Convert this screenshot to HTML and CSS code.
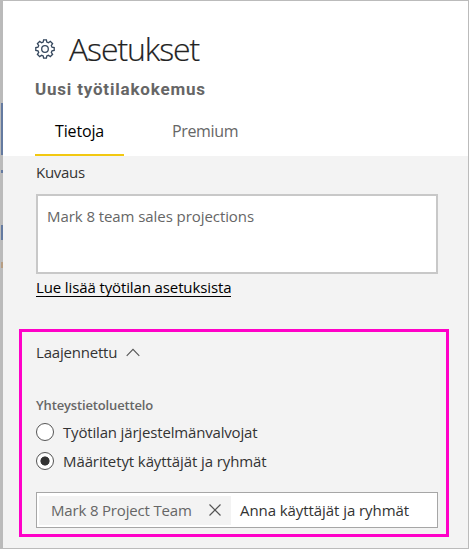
FILE: index.html
```html
<!DOCTYPE html>
<html lang="fi">
<head>
<meta charset="utf-8">
<title>Asetukset</title>
<link rel="stylesheet" href="styles.css">
</head>
<body>
<div class="window">
  <div class="backdrop"><i class="bar"></i><i class="dot"></i><i class="block"></i><i class="spark"></i></div>
  <main class="panel">
    <header class="head">
      <div class="title-row">
        <svg class="gear" viewBox="0 0 20 20" width="20" height="20"><path d="M8.200 3 8.600.8h2.800l.4 2.200 1.600.7 1.900-1.300 2.300 2.300-1.300 1.900.7 1.600 2.200.4v2.800l-2.200.4-.7 1.600 1.300 1.900-2.300 2.300-1.900-1.300-1.600.7-.4 2.200H8.600L8.200 17l-1.600-.7-1.900 1.300-2.300-2.300 1.300-1.900-.7-1.600-2.200-.4V8.600L3 8.200l.7-1.600-1.300-1.900 2.300-2.300 1.900 1.300z"/><circle cx="10" cy="10" r="3.300"/></svg>
        <h1>Asetukset</h1>
      </div>
      <h2>Uusi työtilakokemus</h2>
      <nav class="tabs"><a class="tab active"><span>Tietoja</span></a><a class="tab"><span>Premium</span></a></nav>
    </header>
    <section class="body">
      <label class="desc-label">Kuvaus</label>
      <div class="textarea"><span>Mark 8 team sales projections</span></div>
      <a class="link">Lue lisää työtilan asetuksista</a>
      <div class="advanced">
        <div class="toggle"><span>Laajennettu</span><svg width="14" height="9" viewBox="0 0 14 9"><path d="M.7 7.800 7 1.300l6.300 6.500"/></svg></div>
        <h3>Yhteystietoluettelo</h3>
        <div class="option"><i class="radio"></i><span>Työtilan järjestelmänvalvojat</span></div>
        <div class="option"><i class="radio on"></i><span>Määritetyt käyttäjät ja ryhmät</span></div>
        <div class="people">
          <div class="chip"><span>Mark 8 Project Team</span><svg width="12" height="12" viewBox="0 0 12 12"><path d="M.5.5l11 11M11.500.5l-11 11"/></svg></div>
          <span class="hint">Anna käyttäjät ja ryhmät</span>
        </div>
      </div>
    </section>
  </main>
</div>
</body>
</html>
```
FILE: styles.css
```css
* { box-sizing: border-box; }
body { margin: 0; font-family: "Open Sans", "Noto Sans", sans-serif; font-size: 15px; color: #333; letter-spacing: -.07px; }
h1, h2, h3 { margin: 0; }
span, h1, h2, h3, .link, label { white-space: nowrap; }
.window { width: 469px; height: 549px; border: 1px solid #bbb; display: flex; overflow: hidden; }
.backdrop { width: 2px; background: #bababa; display: flex; flex-direction: column; flex: none; }
.backdrop i { display: block; background: #647aa0; }
.bar { height: 52px; margin-top: 102px; }
.dot { height: 3px; margin-top: 15px; }
.block { height: 15px; margin-top: 52px; }
.backdrop .spark { height: 6px; margin-top: 22px; background: #b79e84; }
.panel { flex: 1; min-width: 0; background: #f3f3f3; }
.head { height: 155px; background: #fff; padding: 28px 0 0 32px; }
.title-row { display: flex; height: 40px; align-items: center; gap: 14px; }
.gear { fill: none; stroke: #35475d; stroke-width: 1.3; }
h1 { font-size: 32px; font-weight: 300; line-height: 40px; letter-spacing: -1.1px; color: #222; -webkit-text-stroke: .2px #222; }
h2 { font-family: Roboto, sans-serif; font-size: 17px; font-weight: 700; line-height: 20px; margin-top: 10px; color: #666; letter-spacing: .8px; }
.tabs { display: flex; margin-top: 20px; height: 37px; gap: 28px; font-size: 16px; }
.tab { display: block; padding: 1px 20px 0; line-height: 22px; color: #666; letter-spacing: -.35px; }
.tab.active { color: #000; width: 89px; border-bottom: 2px solid #f2c811; letter-spacing: -.15px; }
.body { padding: 5px 30px 0 16px; }
.desc-label { display: block; margin-left: 17px; line-height: 22px; letter-spacing: -.3px; }
.textarea { margin: 11px 0 0 17px; width: 402px; height: 80px; border: 2px solid #c8c8c8; background: #fff; padding: 9px 9px; line-height: 22px; color: #666; }
.link { display: block; width: 195px; height: 23px; margin: 0 0 0 17px; padding-top: 2px; line-height: 22px; color: #000; border-bottom: 1px solid #000; letter-spacing: -.12px; }
.advanced { width: 430px; height: 208px; margin-top: 32px; border: 3px solid #ff00c8; padding: 9px 0 0 14px; }
.toggle { display: flex; align-items: center; gap: 9px; height: 22px; letter-spacing: -.2px; }
.toggle svg { fill: none; stroke: #555; stroke-width: 1.1; }
h3 { font-size: 13px; font-weight: 600; line-height: 20px; margin-top: 32px; color: #666; letter-spacing: -.15px; }
.option { display: flex; align-items: center; height: 22px; gap: 9px; margin-top: 6px; letter-spacing: -.17px; }
.option + .option { margin-top: 7px; letter-spacing: -.1px; }
.radio { width: 18px; height: 18px; border: 1px solid #555; border-radius: 50%; background: #fff; flex: none; }
.radio.on { background: radial-gradient(circle, #333 0 4.200px, #fff 4.900px); }
.people { display: flex; align-items: center; width: 402px; height: 36px; margin-top: 20px; border: 1px solid #a6a6a6; background: #fff; padding-left: 2px; }
.chip { display: flex; align-items: center; justify-content: space-between; width: 192px; height: 29px; background: #f3f3f3; padding: 0 10px 1px 12px; color: #666; letter-spacing: -.17px; }
.chip svg { stroke: #555; stroke-width: 1.200; }
.hint { margin-left: 9px; }
```
